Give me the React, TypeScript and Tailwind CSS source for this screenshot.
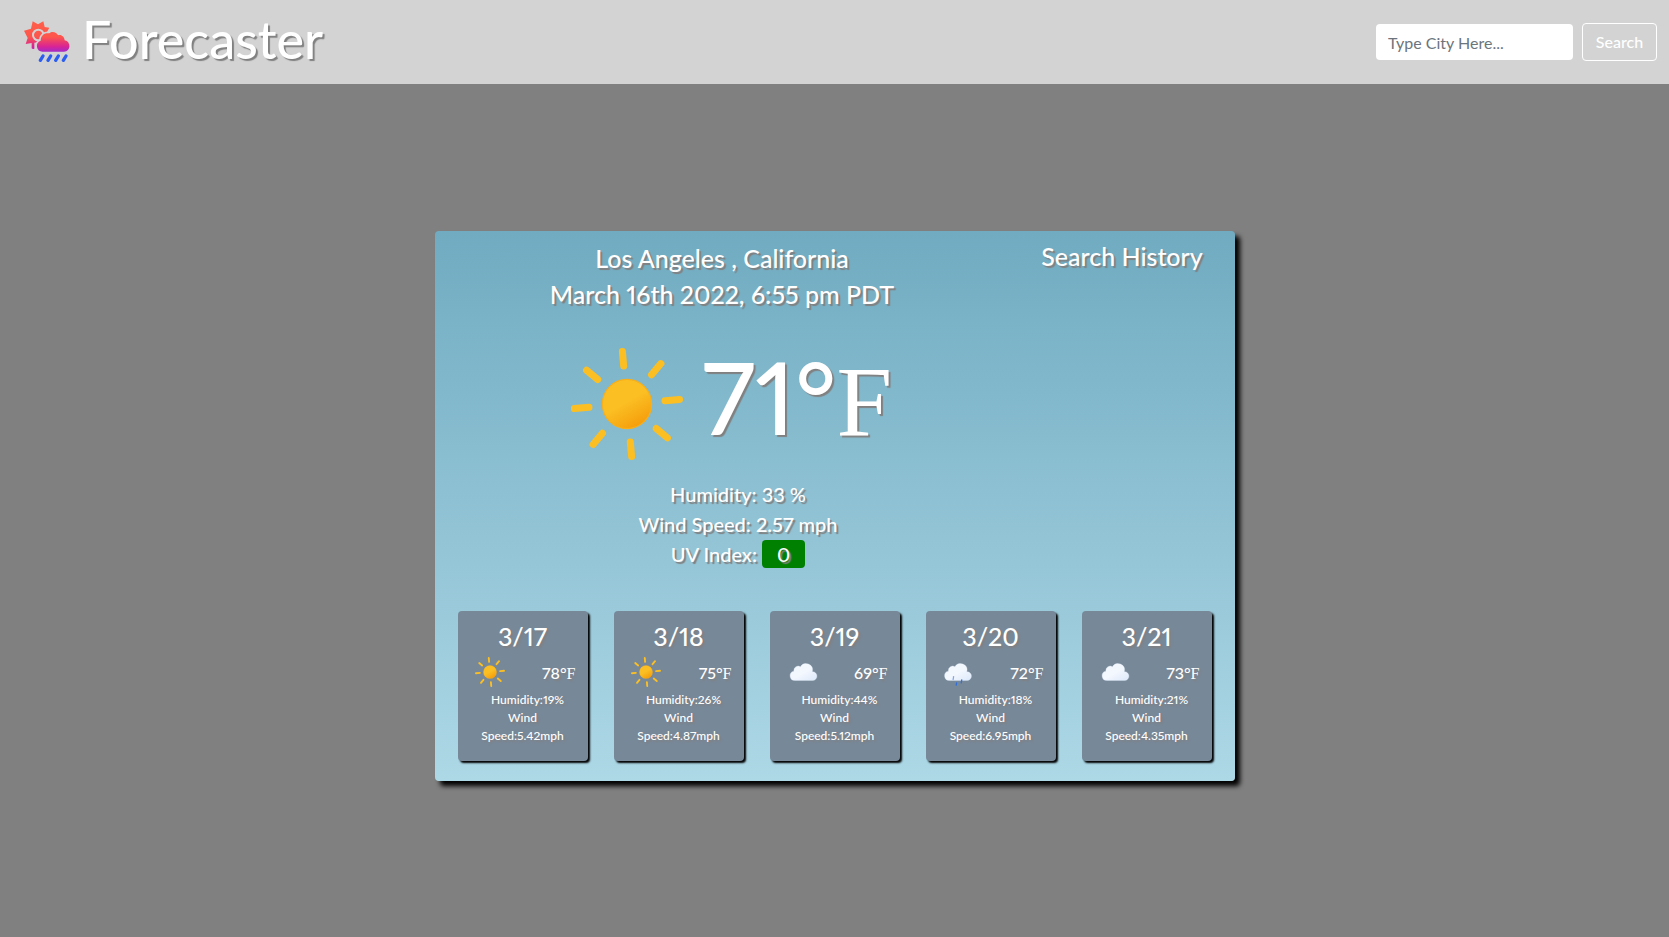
import React from "react";

type Condition = "sun" | "cloud" | "rain";

interface Day {
  date: string;
  condition: Condition;
  temp: number;
  humidity: number;
  wind: number;
}

const days: Day[] = [
  { date: "3/17", condition: "sun", temp: 78, humidity: 19, wind: 5.42 },
  { date: "3/18", condition: "sun", temp: 75, humidity: 26, wind: 4.87 },
  { date: "3/19", condition: "cloud", temp: 69, humidity: 44, wind: 5.12 },
  { date: "3/20", condition: "rain", temp: 72, humidity: 18, wind: 6.95 },
  { date: "3/21", condition: "cloud", temp: 73, humidity: 21, wind: 4.35 },
];

const CLOUD =
  "M46.5 31.5h-.32a10.49 10.49 0 00-19.11-8 7 7 0 00-10.57 6 7.21 7.21 0 00.1 1.14A7.5 7.5 0 0018 45.5a4.19 4.19 0 00.5 0v0h28a7 7 0 000-14z";

function WeatherIcon({ condition, className }: { condition: Condition; className: string }) {
  const id = React.useId();
  if (condition === "sun") {
    return (
      <svg viewBox="0 0 64 64" className={className} aria-hidden="true">
        <defs>
          <linearGradient id={id} x1="26.75" y1="22.91" x2="37.25" y2="41.09" gradientUnits="userSpaceOnUse">
            <stop offset="0" stopColor="#fbbf24" />
            <stop offset=".45" stopColor="#fbbf24" />
            <stop offset="1" stopColor="#f59e0b" />
          </linearGradient>
        </defs>
        <circle cx="32" cy="32" r="10.5" fill={`url(#${id})`} stroke="#f8af18" strokeWidth=".5" />
        <path
          transform="rotate(-5 32 32)"
          d="M32 15.71V9.5m0 45v-6.21m11.52-27.81l4.39-4.39M16.09 47.91l4.39-4.39m0-23l-4.39-4.39m31.82 31.78l-4.39-4.39M15.71 32H9.5m45 0h-6.21"
          fill="none"
          stroke="#fbbf24"
          strokeWidth="3"
          strokeLinecap="round"
        />
      </svg>
    );
  }
  return (
    <svg viewBox="0 0 64 64" className={className} aria-hidden="true">
      <defs>
        <linearGradient id={id} x1="22.56" y1="21.96" x2="39.2" y2="50.8" gradientUnits="userSpaceOnUse">
          <stop offset="0" stopColor="#f3f7fe" />
          <stop offset=".45" stopColor="#f3f7fe" />
          <stop offset="1" stopColor="#deeafb" />
        </linearGradient>
      </defs>
      <path
        d={CLOUD}
        transform={condition === "cloud" ? "translate(2.4 0)" : undefined}
        fill={`url(#${id})`}
        stroke="#e6effc"
        strokeWidth=".5"
      />
      {condition === "rain" && (
        <g fill="none" strokeLinecap="round" strokeWidth="2">
          <path d="M25 39.5l-.8 4.5" stroke="#7fa6e8" />
          <path d="M38 44.5l-.8 5" stroke="#2f6fdb" />
          <path d="M29.8 49.5l-.6 3.5" stroke="#2f6fdb" />
        </g>
      )}
    </svg>
  );
}

function Logo() {
  return (
    <svg viewBox="0 0 150 138" className="mb-0.5 h-[46px] w-[50px] shrink-0" aria-hidden="true">
      <defs>
        <linearGradient id="logo-fill" x1="0" y1="10" x2="0" y2="104" gradientUnits="userSpaceOnUse">
          <stop offset="0" stopColor="#ff5f4a" />
          <stop offset=".5" stopColor="#fd564c" />
          <stop offset=".8" stopColor="#d92494" />
          <stop offset="1" stopColor="#9a2cd0" />
        </linearGradient>
      </defs>
      <path
        d="M32 10l16 9 16-9 4 17 14 2-7 13-20 30-18 2v18q-5 3-8-1V75l-18 3 6-18-11-22 21-6z"
        fill="url(#logo-fill)"
      />
      <circle cx="49" cy="51" r="16" fill="url(#logo-fill)" stroke="#d3d3d3" strokeWidth="6" />
      <path
        d="M62 101a17 17 0 01-6-33c0-17 13-25 26-22 8-8 23-3 26 6 11-3 19 5 20 15 20 4 19 34-2 34z"
        fill="url(#logo-fill)"
        stroke="#d3d3d3"
        strokeWidth="10"
        strokeLinejoin="round"
        paintOrder="stroke"
      />
      <path
        d="M63 114l-8 13M86 114l-8 13M109 114l-8 13M132 114l-8 13"
        stroke="#2b5df0"
        strokeWidth="10"
        strokeLinecap="round"
      />
    </svg>
  );
}

function Fahrenheit() {
  return (
    <>
      °<span className="font-['Liberation_Serif',serif] font-normal">F</span>
    </>
  );
}

function DayCard({ day }: { day: Day }) {
  return (
    <li className="flex h-[150px] w-[130px] flex-col rounded bg-[#778899] pt-[7px] text-center shadow-[2px_2px_2px_#000]">
      <h3 className="text-[25px] leading-9">{day.date}</h3>
      <div className="flex h-[37px] items-center justify-between px-3">
        <WeatherIcon condition={day.condition} className="-mt-0.5 size-10" />
        <span className="pt-0.5 text-base">
          {day.temp}
          <Fahrenheit />
        </span>
      </div>
      <p className="pl-2.5 text-xs leading-[18px]">Humidity:{day.humidity}%</p>
      <p className="px-5 text-xs leading-[18px]">
        Wind
        <br />
        Speed:{day.wind}mph
      </p>
    </li>
  );
}

export default function App() {
  return (
    <div className="min-h-screen bg-[#808080] font-[Lato,sans-serif] font-medium text-white proportional-nums">
      <header className="flex h-[84px] items-center justify-between bg-[#d3d3d3] pr-3 pl-[22px]">
        <a href="#" className="flex items-center gap-2.5">
          <Logo />
          <h1 className="pb-1.5 text-[52px] leading-[76px] [text-shadow:2px_2px_1px_gray]">Forecaster</h1>
        </a>
        <form className="flex items-center gap-[9px]" onSubmit={(e) => e.preventDefault()}>
          <input
            type="search"
            aria-label="City"
            placeholder="Type City Here..."
            className="h-9 w-[197px] rounded bg-white px-3 text-base font-normal text-gray-800 placeholder:text-[#6c757d]"
          />
          <button type="submit" className="h-[38px] w-[75px] rounded border border-white text-base">
            Search
          </button>
        </form>
      </header>
      <main className="flex justify-center pt-[147px] pb-10">
        <section className="flex min-h-[550px] w-[800px] flex-col rounded bg-linear-to-b from-[#70abc1] to-[#add8e6] shadow-[5px_5px_5px_#000] [text-shadow:2px_2px_1px_gray]">
          <div className="flex grow">
            <div className="flex w-[575px] flex-col items-center pt-[9px]">
              <h2 className="text-center text-[25px] leading-9">
                Los Angeles , California
                <br />
                March 16th 2022, 6:55 pm PDT
              </h2>
              <div className="mt-[17px] flex h-[150px] items-center">
                <WeatherIcon condition="sun" className="size-[150px]" />
                <p className="pb-2.5 text-[100px] leading-[146px]">
                  71
                  <Fahrenheit />
                </p>
              </div>
              <ul className="pl-8 text-center text-xl leading-[30px]">
                <li>Humidity: 33 %</li>
                <li>Wind Speed: 2.57 mph</li>
                <li>
                  UV Index: <span className="inline-block rounded bg-[green] px-[15px] leading-7">0</span>
                </li>
              </ul>
            </div>
            <aside className="flex-1 pt-[7px] text-center">
              <h2 className="text-[25px] leading-9">Search History</h2>
            </aside>
          </div>
          <ul className="flex justify-center gap-[26px] pb-5 [text-shadow:2px_2px_2px_gray]">
            {days.map((day) => (
              <DayCard key={day.date} day={day} />
            ))}
          </ul>
        </section>
      </main>
    </div>
  );
}
